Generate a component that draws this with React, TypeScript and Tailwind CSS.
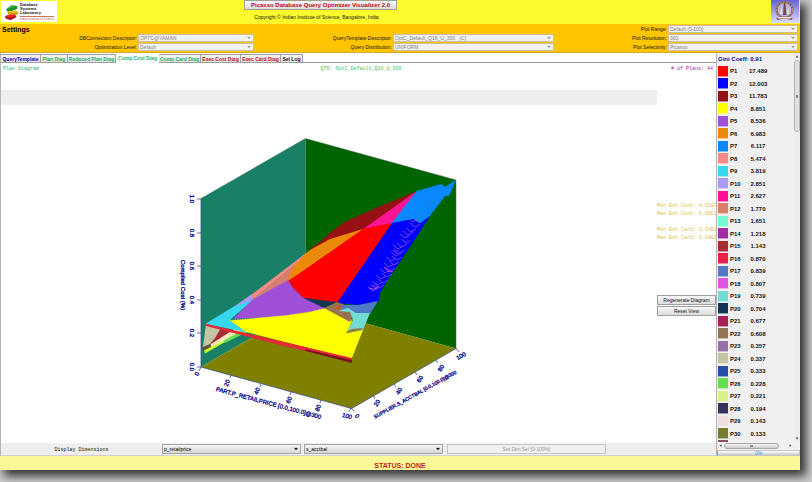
import React from "react";

type Plan = { id: string; value: string; swatch: string };

const plans: Plan[] = [
  { id: "P1", value: "17.489", swatch: "bg-[#ff0000]" },
  { id: "P2", value: "12.003", swatch: "bg-[#0000ff]" },
  { id: "P3", value: "11.783", swatch: "bg-[#961014]" },
  { id: "P4", value: "8.851", swatch: "bg-[#ffff00]" },
  { id: "P5", value: "8.536", swatch: "bg-[#a050d8]" },
  { id: "P6", value: "6.983", swatch: "bg-[#eb8a0a]" },
  { id: "P7", value: "6.117", swatch: "bg-[#0a88ff]" },
  { id: "P8", value: "5.474", swatch: "bg-[#f68a85]" },
  { id: "P9", value: "3.819", swatch: "bg-[#35d8ee]" },
  { id: "P10", value: "2.851", swatch: "bg-[#aa9af8]" },
  { id: "P11", value: "2.627", swatch: "bg-[#ff1096]" },
  { id: "P12", value: "1.770", swatch: "bg-[#da7d6c]" },
  { id: "P13", value: "1.651", swatch: "bg-[#76fad6]" },
  { id: "P14", value: "1.218", swatch: "bg-[#a22ca4]" },
  { id: "P15", value: "1.143", swatch: "bg-[#a52e30]" },
  { id: "P16", value: "0.870", swatch: "bg-[#ee2048]" },
  { id: "P17", value: "0.839", swatch: "bg-[#5078c4]" },
  { id: "P18", value: "0.807", swatch: "bg-[#e055e0]" },
  { id: "P19", value: "0.739", swatch: "bg-[#72dcd4]" },
  { id: "P20", value: "0.704", swatch: "bg-[#123456]" },
  { id: "P21", value: "0.677", swatch: "bg-[#a82058]" },
  { id: "P22", value: "0.608", swatch: "bg-[#967452]" },
  { id: "P23", value: "0.357", swatch: "bg-[#9670aa]" },
  { id: "P24", value: "0.337", swatch: "bg-[#c4c4a2]" },
  { id: "P25", value: "0.333", swatch: "bg-[#2450a4]" },
  { id: "P26", value: "0.228", swatch: "bg-[#62e050]" },
  { id: "P27", value: "0.221", swatch: "bg-[#d8f28a]" },
  { id: "P28", value: "0.194", swatch: "bg-[#34345c]" },
  { id: "P29", value: "0.143", swatch: "bg-[#f0dee0]" },
  { id: "P30", value: "0.133", swatch: "bg-[#787830]" },
];

const tabs = [
  { label: "QueryTemplate", tone: "text-[#0a0ab4]", width: "w-10" },
  { label: "Plan Diag", tone: "text-[#22b464]", width: "w-[27px]" },
  { label: "Reduced Plan Diag", tone: "text-[#22b464]", width: "w-12" },
  { label: "Comp Cost Diag", tone: "text-[#22b464]", width: "w-[43px]", active: true },
  { label: "Comp Card Diag", tone: "text-[#22b464]", width: "w-[42px]" },
  { label: "Exec Cost Diag", tone: "text-[#c80a1e]", width: "w-10" },
  { label: "Exec Card Diag", tone: "text-[#c80a1e]", width: "w-10" },
  { label: "Sel Log", tone: "text-[#3c1414]", width: "w-[22px]" },
];

const MONO = "font-['Liberation_Mono',monospace]";

function Arrow({ className }: { className: string }) {
  return (
    <svg viewBox="0 0 6 4" className={`pointer-events-none absolute top-1/2 right-[3px] h-[3px] w-1 -translate-y-1/2 ${className}`}>
      <path d="M0 0h6L3 4z" fill="currentColor" />
    </svg>
  );
}

function Setting({ id, label, value, place }: { id: string; label: string; value: string; place: string }) {
  return (
    <>
      <label htmlFor={id} className={`pr-px text-right whitespace-nowrap ${place}`}>
        {label}
      </label>
      <span className="relative h-2">
        <select
          id={id}
          disabled
          className="block h-2 w-full appearance-none border border-[#c9bfa0] bg-[#f2f2f0] pl-px text-[5px] leading-[6px] text-[#828282] opacity-100"
        >
          <option>{value}</option>
        </select>
        <Arrow className="text-[#a0a0a0]" />
      </span>
    </>
  );
}

function DimensionSelect({ name, value }: { name: string; value: string }) {
  return (
    <span className="relative h-[10px]">
      <select
        aria-label={name}
        className="block h-[10px] w-full appearance-none border border-[#a4a4a4] bg-linear-to-b from-[#f6f6f6] to-[#d6d6d6] pl-px text-[5px] leading-[8px] text-black"
      >
        <option>{value}</option>
      </select>
      <Arrow className="text-black" />
    </span>
  );
}

function LabLogo() {
  return (
    <div className="m-px flex h-[21px] w-14 items-start bg-white pt-[2px] pl-1">
      <svg viewBox="0 0 16 18" className="h-[18px] w-[15px] shrink-0">
        <path d="M1 6 7 1.500 13 2.500 13 5.500 7 8 3 8.500z" fill="#3cb43c" />
        <path d="M1 6 7 4.500 13 2.500 13 5.500 7 8 3 8.500z" fill="#1e8c32" />
        <path d="M3 8.500 12 7 14 9 14 11.500 6 12 3 11z" fill="#f0c814" />
        <path d="M3 8.500 8 10 14 9 14 11.500 6 12 3 11z" fill="#d2a014" />
        <path d="M0 13.500 3 12 11 11.500 12 14 6 17.500 1 16z" fill="#e62828" />
        <path d="M0 13.500 5 14.500 12 13 12 14.500 6 17.500 1 16z" fill="#b41414" />
      </svg>
      <div className="flex flex-col text-[4px] leading-[4px] font-bold whitespace-nowrap text-[#101010]">
        <span>Database</span>
        <span>Systems</span>
        <span>Laboratory</span>
        <span className="mt-px border-t border-[#c8785a] pt-px text-[3px] leading-[3px] font-normal text-[#b06450]">Indian Institute of Science</span>
      </div>
    </div>
  );
}

function InstituteCrest() {
  return (
    <svg viewBox="0 0 28 23" className="h-[23px] w-7">
      <defs>
        <linearGradient id="crest" x1="0" y1="0" x2="0" y2="1">
          <stop offset="0" stopColor="#6464d2" />
          <stop offset="1" stopColor="#dcdcf8" />
        </linearGradient>
      </defs>
      <rect width="28" height="23" fill="url(#crest)" />
      <circle cx="13.500" cy="10" r="8" fill="#b4b4e6" stroke="#8c5a46" strokeWidth="2" />
      <circle cx="13.500" cy="10" r="8" fill="none" stroke="#d2b496" strokeWidth="1" strokeDasharray="1.500 1.500" />
      <path d="M12 15 12.800 3h1.600l1 12z" fill="#785040" />
      <path d="M9 14 10.500 7l1 7zM16 14l1-7 1.500 7z" fill="#f0e6dc" />
      <path d="M5 18.500q8.500-4 17 0l-2 1.500q-6.500-3-13 0z" fill="#785040" />
      <path d="M7 17h13v1.500H7z" fill="#f0e6dc" />
    </svg>
  );
}

// One chevron of the thin P18 bands that cross the P2 region.
const chevrons = [
  [412, 221], [414, 226], [410, 231], [407, 234], [404, 237], [405, 242], [401, 246], [397, 248],
  [399, 252], [395, 255], [396, 259], [390, 260], [393, 264], [388, 266], [389, 270], [384, 272],
  [386, 276], [380, 278], [382, 282], [376, 284], [378, 287], [372, 290],
];

const costTicks = [
  { text: "1.0", y: 199 }, { text: "0.8", y: 233 }, { text: "0.6", y: 266 },
  { text: "0.4", y: 300 }, { text: "0.2", y: 333 }, { text: "0.0", y: 367 },
];
const partTicks = [
  { text: "0", x: 197, y: 374, turn: -65 }, { text: "20", x: 227, y: 383, turn: -65 },
  { text: "40", x: 257, y: 391, turn: -65 }, { text: "60", x: 289, y: 400, turn: -65 },
  { text: "80", x: 318, y: 408, turn: -65 }, { text: "100", x: 347, y: 416, turn: 15 },
];
const supplierTicks = [
  { text: "0", x: 357, y: 416, turn: 50 }, { text: "20", x: 377, y: 403, turn: -60 },
  { text: "40", x: 399, y: 391, turn: -60 }, { text: "60", x: 420, y: 379, turn: -60 },
  { text: "80", x: 441, y: 368, turn: -60 }, { text: "100", x: 461, y: 356, turn: -30 },
];

function CostSurface() {
  return (
    <svg viewBox="1 105 656 338" className="block h-full w-full" role="img" aria-label="Compilation cost diagram">
      {/* walls and floor */}
      <path d="M201 198.500 305.500 138.500V306.500L201 367z" fill="#198068" />
      <path d="M305.500 138.500 456 180V348.500L305.500 306.500z" fill="#006400" />
      <path d="M201 367 305.500 306.500 456 348.500 351.500 408.500z" fill="#808000" />
      <path d="M201 198.500 305.500 138.500 456 180V348.500" fill="none" stroke="#4c6450" strokeWidth=".5" />

      {/* folded-under strips at the low corner */}
      <path d="M204 350 220 340 240 329 247 332 225 342 205 353.500z" fill="#c8ff28" />
      <path d="M223 338 242 330 247 332 225 343z" fill="#60e050" />
      <path d="M210 343 236 328 243 330 212 347z" fill="#f6eab4" />
      <path d="M220 328 233 330 211 344 208 342z" fill="#a82c34" />
      <path d="M202 347 210 344 211 347 203 351z" fill="#64503c" />
      <path d="M206 324 221 328 215 338 210 344 203 347z" fill="#c4c4a2" />

      {/* plan regions */}
      <path d="M305 256 310 249 320 242 331 232 343 223 360 215 376 208 416.700 191 363 230 330 240 310 251z" fill="#961014" />
      <path d="M362 230 416.700 191 392 224z" fill="#ff1493" />
      <path d="M416.700 191 441.700 184 445 187 456 180 449 196 445 196 429 217 420 223.500 413 219 391 224z" fill="#0a88ff" />
      <path d="M392 223 413 219 420 223.500 430 216 408 250 387 281 380 293 378 303 358 305 336 303z" fill="#0000ff" />
      <path d="M286 281 310 265 362 229 392 223 337 303 303 298 293 289z" fill="#ff0000" />
      <path d="M288 281 289 272 297 261 305 254 310 250 330 239 363 229 310 266z" fill="#eb8a0a" />
      <path d="M251 301 298 262 290 272 288 282z" fill="#d87e6e" />
      <path d="M251 301V295L280 273 306 253 298 262z" fill="#f68a85" />
      <path d="M232 308 252 294V301L236 308z" fill="#aa9af8" />
      <path d="M205 324 233 307 253 300 232 318 230 320.500 246 332z" fill="#35d8ee" />
      <path d="M252 300 288 280 293 288 303 297.700 325 304V309L310 312 286 316 233 319z" fill="#a050d8" />
      <path d="M303 297.700 336 302V309L324 308z" fill="#143450" />
      <path d="M230 320.500 286 315.500 310 312 326 308 352 321 347 333 363 330 351.500 359 246 332z" fill="#ffff00" />
      <path d="M230 320.500 286 315.500 310 312 326 308" fill="none" stroke="#e6dc50" strokeWidth="1" strokeDasharray="1 1.500" />
      <path d="M324 308 337 302 345 305 354 312 350 322z" fill="#967452" />
      <path d="M335 308 343 305 339 310z" fill="#c85014" />
      <path d="M342 305 358 305 378 301 370 314 356 313 350 310 341 309z" fill="#5078c4" />
      <path d="M338 311 348 308 356 313 370 313 363 330 347 333 353 320 350 312z" fill="#72dcd4" />
      <path d="M346 332 352 329 363 328 361 330 347 333z" fill="#96783c" />
      <path d="M205 323.500 352 358V362L280 345 206 326z" fill="#e62838" />
      <path d="M305 349 352 360V363L306 351z" fill="#781020" />

      {chevrons.map(([x, y]) => (
        <path key={`${x}-${y}`} d={`M${x - 4} ${y - 3}l5 4 5-3`} fill="none" stroke="#8c50dc" strokeWidth=".8" />
      ))}
      <path d="M371 285l5 3 3-2M369 288l4 1 4-1M384 267l5 5 4-1M393 250l5 4" fill="none" stroke="#e055e0" strokeWidth=".8" />
      <path d="M420 213l2 2M427 202l2 3M431 200l2 3" stroke="#2c78b4" strokeWidth="1" />

      {/* axes */}
      <path d="M201 198.500V367L351.500 408.500 456 348.500" fill="none" stroke="#3c5082" strokeWidth=".8" />
      <path
        d="M197 199h4M197 233h4M197 266h4M197 300h4M197 333h4M197 367h4M201 367l-2 4M231 375l-1 3M261 384l-1 3M291 392l-1 3M321 400l-1 3M351 408l-2 4M351 408l3 3M373 396l2 3M394 384l2 3M415 372l2 3M436 360l2 3M456 348l3 4"
        stroke="#3c5082"
        strokeWidth=".8"
      />
      <g fill="#00008c" stroke="#00008c" strokeWidth=".3" fontFamily="'Liberation Sans',sans-serif" fontSize="6" textAnchor="middle">
        {costTicks.map((t) => (
          <text key={t.text} transform={`translate(190 ${t.y}) rotate(90)`}>{t.text}</text>
        ))}
        {[...partTicks, ...supplierTicks].map((t) => (
          <text key={`${t.x}`} transform={`translate(${t.x} ${t.y}) rotate(${t.turn})`} dy="2">{t.text}</text>
        ))}
        <text transform="translate(181 285) rotate(90)">Compiled Cost (%)</text>
        <text transform="translate(268 405) rotate(15)">PART.P_RETAILPRICE [0.0,100.0]@300</text>
        <text transform="translate(416 396) rotate(-29)" fontSize="5">SUPPLIER.S_ACCTBAL [0.0,100.0]@300</text>
      </g>
    </svg>
  );
}

function Legend() {
  return (
    <aside className="flex w-[84px] shrink-0 flex-col border-l border-[#b4b4b4] bg-[#f0f0f0]">
      <div className="flex flex-1">
        <div className="flex flex-1 flex-col pl-px">
          <h2 className="h-3 text-[6px] leading-[12px] font-bold text-[#0a0aa0]">Gini Coeff: 0.91</h2>
          <ul className="flex flex-1 flex-col">
            {plans.map((p) => (
              <li key={p.id} className="flex flex-1 items-center text-[6px] leading-[8px] font-bold text-[#141414]">
                <span className={`h-[11px] w-[10px] border-b border-white/50 ${p.swatch}`} />
                <span className="w-[21px] pl-[2px]">{p.id}</span>
                <span className="w-[18px] text-center">{p.value}</span>
              </li>
            ))}
          </ul>
          <span className="h-[2px] w-[10px] bg-[#8c5060]" />
        </div>
        <div className="flex w-[6px] flex-col items-center bg-[#ececec] text-[#505050]">
          <svg viewBox="0 0 6 7" className="h-[7px] w-[6px]"><path d="M1.500 4.500h3L3 2.500z" fill="currentColor" /></svg>
          <div className="flex h-[72px] w-[6px] items-center justify-center rounded-sm border border-[#b4b4b8] bg-[#e0e0e4]">
            <span className="h-[3px] w-[2px] bg-[#8c8c8c]" />
          </div>
          <svg viewBox="0 0 6 7" className="mt-auto h-[7px] w-[6px]"><path d="M1.500 2.500h3L3 4.500z" fill="currentColor" /></svg>
        </div>
      </div>
      <div className="flex h-[7px] w-[77px] items-center text-[#505050]">
        <svg viewBox="0 0 7 7" className="h-[7px] w-[7px]"><path d="M4.500 2v3L2.500 3.500z" fill="currentColor" /></svg>
        <div className="flex h-[6px] w-[55px] items-center justify-center rounded-sm border border-[#a8a8a8] bg-linear-to-b from-[#f4f4f4] to-[#cccccc]">
          <span className="h-[2px] w-[3px] bg-[#8c8c8c]" />
        </div>
        <svg viewBox="0 0 7 7" className="ml-auto h-[7px] w-[7px]"><path d="M2.500 2v3L4.500 3.500z" fill="currentColor" /></svg>
      </div>
      <div
        role="progressbar"
        aria-valuenow={0}
        className="mt-px h-[6px] border border-l-[#50aaf0] border-[#c4c4c4] bg-linear-to-b from-white to-[#c8c8c8] text-center text-[5px] leading-[5px] text-[#3c96dc]"
      >
        0%
      </div>
    </aside>
  );
}

export default function App() {
  return (
    <div className="flex min-h-screen flex-col overflow-hidden bg-[#cccccc] pr-3 pb-3 font-['Liberation_Sans',Arial,sans-serif] text-[5px] leading-[8px] text-[#141414]">
      <div className="flex flex-1 flex-col bg-white shadow-[5px_5px_9px_1px_rgba(0,0,0,0.75)]">
        <header className="grid h-6 grid-cols-[244fr_153fr_403fr] bg-[#fcfa2c]">
          <LabLogo />
          <div className="flex flex-col">
            <button className="h-[10px] border border-[#a0a08c] bg-linear-to-b from-[#f8f8f8] to-[#dcdcdc] text-[6px] leading-[8px] font-bold whitespace-nowrap text-[#c80a1e]">
              Picasso Database Query Optimizer Visualizer 2.0
            </button>
            <p className="mt-[3px] pr-2 text-center whitespace-nowrap">Copyright © Indian Institute of Science, Bangalore, India</p>
          </div>
          <div className="flex justify-end pr-px"><InstituteCrest /></div>
        </header>

        <section className="grid h-[29px] grid-cols-[138fr_116fr_139fr_161fr_114fr_130fr_2fr] grid-rows-[9px_9px_9px] border-b border-[#d2aa28] bg-[#ffc600] pt-px">
          <h1 className="col-start-1 row-start-1 pl-[2px] text-[7px] leading-[9px] font-bold text-black">Settings</h1>
          <Setting id="range" label="Plot Range:" value="Default (0-100)" place="col-start-5" />
          <Setting id="db" label="DBConnection Descriptor:" value="OPTC@YAMAN" place="col-start-1" />
          <Setting id="template" label="QueryTemplate Descriptor:" value={"OptC_Default_Q16_U_300\u00a0\u00a0\u00a0(C)"} place="col-start-3" />
          <Setting id="resolution" label="Plot Resolution:" value="300" place="col-start-5" />
          <Setting id="level" label="Optimization Level:" value="Default" place="col-start-1" />
          <Setting id="distribution" label="Query Distribution:" value="UNIFORM" place="col-start-3" />
          <Setting id="selectivity" label="Plot Selectivity:" value="Picasso" place="col-start-5" />
        </section>

        <div className="flex flex-1">
          <main className="flex flex-1 flex-col border-l border-[#b4b4b4]">
            <nav role="tablist" className="flex h-[10px] items-end border-b border-[#a0a0a0]">
              {tabs.map((t) => (
                <button
                  key={t.label}
                  role="tab"
                  aria-selected={!!t.active}
                  className={`shrink-0 text-center text-[5px] font-bold whitespace-nowrap ${t.width} ${t.tone} ${
                    t.active ? "-mb-px h-[10px] bg-white pb-px leading-[8px]" : "h-2 border-t border-r border-[#a0a0a0] bg-linear-to-b from-[#f6f6f6] to-[#e0e0e0] leading-[8px]"
                  }`}
                >
                  {t.label}
                </button>
              ))}
            </nav>

            <div className={`grid h-[27px] grid-cols-[320fr_80fr_314fr] pt-[2px] pr-[3px] pl-[2px] ${MONO}`}>
              <span className="text-[#28b478]">Plan Diagram</span>
              <span className="text-center whitespace-nowrap text-[#28c878]">QTD: OptC_Default_Q16_U_300</span>
              <span className="text-right text-[#a01ea0]"># of Plans: 44</span>
            </div>

            <div className="flex flex-1">
              <div className="flex flex-1 flex-col">
                <div className="h-[15px] bg-[#eeeeee]" />
                <div className="min-h-[338px] flex-1 basis-0"><CostSurface /></div>
              </div>
              <div className="flex w-[59px] shrink-0 flex-col pt-[112px]">
                <div className={`overflow-hidden whitespace-pre text-[#dcbe3c] ${MONO}`}>
                  <p>Min Est Cost: 4.31E0</p>
                  <p>Max Est Cost: 6.65E1</p>
                  <p className="mt-2">Min Est Card: 3.24E2</p>
                  <p>Max Est Card: 1.84E5</p>
                </div>
                <div className="mt-[53px] flex flex-col gap-px">
                  <button className="h-[10px] border border-[#a0a0a0] bg-linear-to-b from-[#f8f8f8] to-[#dcdcdc] leading-[8px] whitespace-nowrap">Regenerate Diagram</button>
                  <button className="h-[10px] border border-[#a0a0a0] bg-linear-to-b from-[#f8f8f8] to-[#dcdcdc] leading-[8px]">Reset View</button>
                </div>
              </div>
            </div>

            <div className="grid h-[13px] grid-cols-[161fr_139fr_3fr_139fr_4fr_159fr_110fr] border-b border-[#d2d2d2] bg-[#eeeeee] pt-px">
              <span className={`text-center leading-[12px] ${MONO}`}>Display Dimensions</span>
              <DimensionSelect name="First dimension" value="p_retailprice" />
              <span />
              <DimensionSelect name="Second dimension" value="s_acctbal" />
              <span />
              <button disabled className="h-[10px] border border-[#c4c4c4] bg-[#f0f0f0] leading-[8px] text-[#969696]">Set Dim Sel [0-100%]</button>
            </div>
          </main>
          <Legend />
        </div>

        <footer className="h-[14px] bg-[#faf898] pt-px text-center text-[7px] leading-[18px] font-bold text-[#c81e0a]">STATUS: DONE</footer>
      </div>
    </div>
  );
}
